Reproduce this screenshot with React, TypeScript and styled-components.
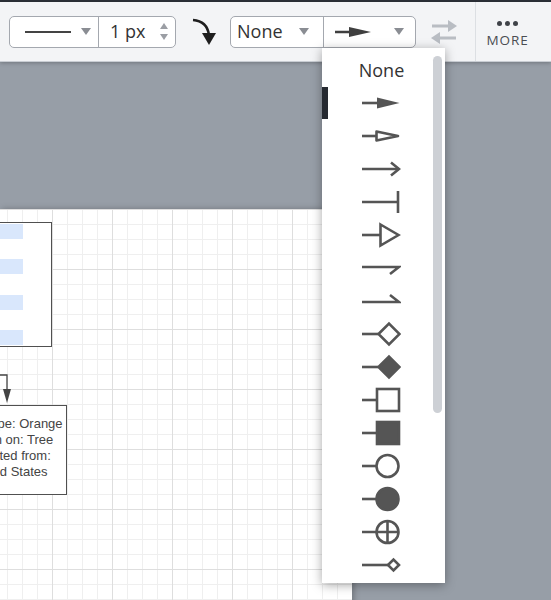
import React from "react";
import styled, { createGlobalStyle } from "styled-components";

const GlobalStyle = createGlobalStyle`
  html, body { margin: 0; padding: 0; }
  body { font-family: "Open Sans", "Liberation Sans", sans-serif; background: #979ea7; }
`;

const Root = styled.div`
  position: relative;
  width: 551px;
  height: 600px;
  overflow: hidden;
  display: flex;
  flex-direction: column;
  background: #979ea7;
`;

const TopStrip = styled.div`
  height: 2px;
  background: #2c3038;
  flex: none;
`;

const Toolbar = styled.div`
  position: relative;
  z-index: 2;
  flex: none;
  height: 60px;
  box-sizing: border-box;
  background: #f3f4f6;
  border-bottom: 1px solid #c9cdd3;
  box-shadow: 0 1px 4px rgba(0, 0, 0, 0.25);
  display: flex;
  align-items: center;
  padding-left: 9px;
`;

const Group = styled.div`
  display: flex;
  height: 32px;
  box-sizing: border-box;
  border: 1.5px solid #a4a8af;
  border-radius: 5px;
  background: #fff;
  overflow: hidden;
`;

const Segment = styled.div<{ $w: number }>`
  width: ${(p) => p.$w}px;
  box-sizing: border-box;
  display: flex;
  align-items: center;
  padding: 0 6px;
  gap: 6px;
  & + & {
    border-left: 1.5px solid #a4a8af;
  }
`;

const SegText = styled.span`
  flex: 1;
  font-size: 18px;
  color: #333;
  line-height: 1;
  padding-bottom: 1px;
`;

const Caret = styled.span`
  width: 0;
  height: 0;
  border-left: 5px solid transparent;
  border-right: 5px solid transparent;
  border-top: 7px solid #8a8d93;
  flex: none;
`;

const Spinner = styled.div`
  display: flex;
  flex-direction: column;
  gap: 5px;
  margin-right: 1px;
  &::before,
  &::after {
    content: "";
    width: 0;
    height: 0;
    border-left: 4.5px solid transparent;
    border-right: 4.5px solid transparent;
  }
  &::before {
    border-bottom: 6px solid #9b9ea4;
  }
  &::after {
    border-top: 6px solid #9b9ea4;
  }
`;

const IconButton = styled.div<{ $ml: number }>`
  margin-left: ${(p) => p.$ml}px;
  display: flex;
  align-items: center;
`;

const Divider = styled.div`
  margin-left: 17px;
  width: 1px;
  align-self: stretch;
  background: #dcdfe3;
`;

const MoreButton = styled.div`
  width: 62px;
  display: flex;
  flex-direction: column;
  align-items: center;
  gap: 8px;
  padding-top: 6px;
`;

const Dots = styled.div`
  display: flex;
  gap: 3px;
  & > span {
    width: 5px;
    height: 5px;
    border-radius: 50%;
    background: #3f4248;
  }
`;

const MoreLabel = styled.span`
  font-size: 13.5px;
  letter-spacing: 0.9px;
  color: #4a4d52;
  line-height: 1;
  padding-left: 1px;
`;

const Canvas = styled.div`
  flex: 1;
  position: relative;
  overflow: hidden;
  padding-top: 147px;
`;

const Page = styled.div`
  position: relative;
  width: 352px;
  height: 400px;
  background-color: #fff;
  background-image: linear-gradient(to right, #dedede 1px, transparent 1px),
    linear-gradient(to bottom, #dedede 1px, transparent 1px),
    linear-gradient(to right, #efefef 1px, transparent 1px),
    linear-gradient(to bottom, #efefef 1px, transparent 1px);
  background-size: 60px 60px, 60px 60px, 15px 15px, 15px 15px;
  background-position: 52px 0, 0 0, 7px 0, 0 0;
  box-shadow: 2px 0 6px rgba(0, 0, 0, 0.25);
`;

const ListNode = styled.div`
  position: absolute;
  left: -100px;
  top: 13px;
  width: 152px;
  height: 125px;
  box-sizing: border-box;
  border: 1.5px solid #505050;
  background: #fff;
  display: flex;
  flex-direction: column;
  justify-content: space-between;
  padding: 0.5px 0;
`;

const Field = styled.div`
  width: 122px;
  height: 15px;
  background: #d9e7fc;
`;

const TextNode = styled.div`
  position: absolute;
  left: -50px;
  top: 196px;
  width: 117px;
  height: 90px;
  box-sizing: border-box;
  border: 1.5px solid #505050;
  background: #fff;
  display: flex;
  flex-direction: column;
  justify-content: center;
  padding-bottom: 4px;
  font-family: "Liberation Sans", Arial, sans-serif;
  font-size: 13px;
  line-height: 16px;
  color: #444;
  text-align: center;
  white-space: nowrap;
`;

const Connector = styled.svg`
  position: absolute;
  left: -10px;
  top: 160px;
`;

const Menu = styled.div`
  position: absolute;
  left: 322px;
  top: 48px;
  width: 123px;
  height: 535px;
  box-sizing: border-box;
  padding-top: 5px;
  background: #fff;
  box-shadow: 0 2px 10px rgba(0, 0, 0, 0.35);
  display: flex;
  flex-direction: column;
  z-index: 5;
`;

const MenuItem = styled.div<{ $selected?: boolean }>`
  position: relative;
  height: 33px;
  flex: none;
  display: flex;
  align-items: center;
  justify-content: center;
  padding-right: 4px;
  font-size: 18px;
  color: #333;
  &::before {
    content: "";
    display: ${(p) => (p.$selected ? "block" : "none")};
    position: absolute;
    left: 0;
    top: 1px;
    bottom: 0;
    width: 6px;
    background: #262a31;
  }
`;

const Scrollbar = styled.div`
  position: absolute;
  right: 3px;
  top: 8px;
  width: 9px;
  height: 357px;
  border-radius: 5px;
  background: #cdd0d5;
`;

const C = "#555";
const SW = 2.6;

type Kind =
  | "filled"
  | "hollowSmall"
  | "open"
  | "bar"
  | "hollowBig"
  | "halfBottom"
  | "halfTop"
  | "diamond"
  | "diamondFilled"
  | "square"
  | "squareFilled"
  | "circle"
  | "circleFilled"
  | "circlePlus"
  | "smallDiamond";

const EndIcon: React.FC<{ kind: Kind }> = ({ kind }) => {
  const line = (x2: number) => <line x1={0} y1={15} x2={x2} y2={15} stroke={C} strokeWidth={SW} />;
  let body: React.ReactNode = null;
  switch (kind) {
    case "filled":
      body = (
        <>
          {line(16)}
          <polygon points="15,9.5 37.5,15 15,20.5" fill={C} />
        </>
      );
      break;
    case "hollowSmall":
      body = (
        <>
          {line(14)}
          <polygon points="14.5,10.5 36,15 14.5,19.5" fill="#fff" stroke={C} strokeWidth={SW} strokeLinejoin="round" />
        </>
      );
      break;
    case "open":
      body = (
        <>
          {line(37)}
          <polyline points="29,8.5 37,15 29,21.5" fill="none" stroke={C} strokeWidth={SW} />
        </>
      );
      break;
    case "bar":
      body = (
        <>
          {line(36)}
          <line x1={36} y1={4} x2={36} y2={26} stroke={C} strokeWidth={SW} />
        </>
      );
      break;
    case "hollowBig":
      body = (
        <>
          {line(18)}
          <polygon points="18.5,4.5 36.5,15 18.5,25.5" fill="#fff" stroke={C} strokeWidth={SW} />
        </>
      );
      break;
    case "halfBottom":
      body = <polyline points="0,14 37,14 28,21" fill="none" stroke={C} strokeWidth={SW} />;
      break;
    case "halfTop":
      body = <polyline points="0,16 37,16 28,9" fill="none" stroke={C} strokeWidth={SW} />;
      break;
    case "diamond":
    case "diamondFilled":
      body = (
        <>
          {line(16)}
          <polygon
            points="16.5,15 27,4.5 37.5,15 27,25.5"
            fill={kind === "diamond" ? "#fff" : C}
            stroke={C}
            strokeWidth={SW}
          />
        </>
      );
      break;
    case "square":
    case "squareFilled":
      body = (
        <>
          {line(14)}
          <rect
            x={15}
            y={4}
            width={22}
            height={22}
            fill={kind === "square" ? "#fff" : C}
            stroke={C}
            strokeWidth={SW}
          />
        </>
      );
      break;
    case "circle":
    case "circleFilled":
      body = (
        <>
          {line(14)}
          <circle cx={25.5} cy={15} r={11} fill={kind === "circle" ? "#fff" : C} stroke={C} strokeWidth={SW} />
        </>
      );
      break;
    case "circlePlus":
      body = (
        <>
          {line(36.5)}
          <circle cx={25.5} cy={15} r={11} fill="none" stroke={C} strokeWidth={SW} />
          <line x1={25.5} y1={4} x2={25.5} y2={26} stroke={C} strokeWidth={SW} />
        </>
      );
      break;
    case "smallDiamond":
      body = (
        <>
          {line(26)}
          <polygon points="26,15 31.5,9.5 37,15 31.5,20.5" fill="#fff" stroke={C} strokeWidth={SW} />
        </>
      );
      break;
  }
  return (
    <svg width={39} height={30} viewBox="0 0 39 30">
      {body}
    </svg>
  );
};

const kinds: Kind[] = [
  "filled",
  "hollowSmall",
  "open",
  "bar",
  "hollowBig",
  "halfBottom",
  "halfTop",
  "diamond",
  "diamondFilled",
  "square",
  "squareFilled",
  "circle",
  "circleFilled",
  "circlePlus",
  "smallDiamond",
];

export default function App() {
  return (
    <Root>
      <GlobalStyle />
      <TopStrip />
      <Toolbar>
        <Group>
          <Segment $w={88}>
            <svg width={50} height={4} viewBox="0 0 50 4" style={{ marginLeft: 9 }}>
              <line x1={0} y1={2} x2={46} y2={2} stroke="#444" strokeWidth={2} />
            </svg>
            <Caret />
          </Segment>
          <Segment $w={77}>
            <SegText style={{ paddingLeft: 5 }}>1 px</SegText>
            <Spinner />
          </Segment>
        </Group>
        <IconButton $ml={15}>
          <svg width={28} height={32} viewBox="0 0 28 32">
            <path d="M2 4 Q16 5 18 19" fill="none" stroke="#1e1e1e" strokeWidth={2.6} />
            <polygon points="11,17 25,17 18,29" fill="#1e1e1e" />
          </svg>
        </IconButton>
        <Group style={{ marginLeft: 11 }}>
          <Segment $w={92}>
            <SegText>None</SegText>
            <Caret style={{ marginRight: 8 }} />
          </Segment>
          <Segment $w={92}>
            <svg width={40} height={14} viewBox="0 0 40 14" style={{ marginLeft: 5 }}>
              <line x1={0} y1={7} x2={16} y2={7} stroke="#3f3f3f" strokeWidth={2.5} />
              <polygon points="14,2 36,7 14,12" fill="#3f3f3f" />
            </svg>
            <span style={{ flex: 1 }} />
            <Caret style={{ marginRight: 5 }} />
          </Segment>
        </Group>
        <IconButton $ml={14}>
          <svg width={28} height={28} viewBox="0 0 28 28">
            <line x1={2} y1={8} x2={19} y2={8} stroke="#b9bdc3" strokeWidth={3} />
            <polygon points="18,2 27,8 18,14" fill="#b9bdc3" />
            <line x1={9} y1={20} x2={26} y2={20} stroke="#b9bdc3" strokeWidth={3} />
            <polygon points="10,14 1,20 10,26" fill="#b9bdc3" />
          </svg>
        </IconButton>
        <Divider />
        <MoreButton>
          <Dots>
            <span />
            <span />
            <span />
          </Dots>
          <MoreLabel>MORE</MoreLabel>
        </MoreButton>
      </Toolbar>
      <Canvas>
        <Page>
          <ListNode>
            <Field />
            <Field />
            <Field />
            <Field />
          </ListNode>
          <Connector width={30} height={40} viewBox="0 0 30 40">
            <path d="M0 6 H17 V24" fill="none" stroke="#444" strokeWidth={1.3} />
            <polygon points="13,20 21,20 17,34" fill="#444" />
          </Connector>
          <TextNode>
            <div>Fruit Type: Orange</div>
            <div>Grown on: Tree</div>
            <div>Imported from:</div>
            <div>United States</div>
          </TextNode>
        </Page>
      </Canvas>
      <Menu>
        <MenuItem>None</MenuItem>
        {kinds.map((k, i) => (
          <MenuItem key={k} $selected={i === 0}>
            <EndIcon kind={k} />
          </MenuItem>
        ))}
        <Scrollbar />
      </Menu>
    </Root>
  );
}
